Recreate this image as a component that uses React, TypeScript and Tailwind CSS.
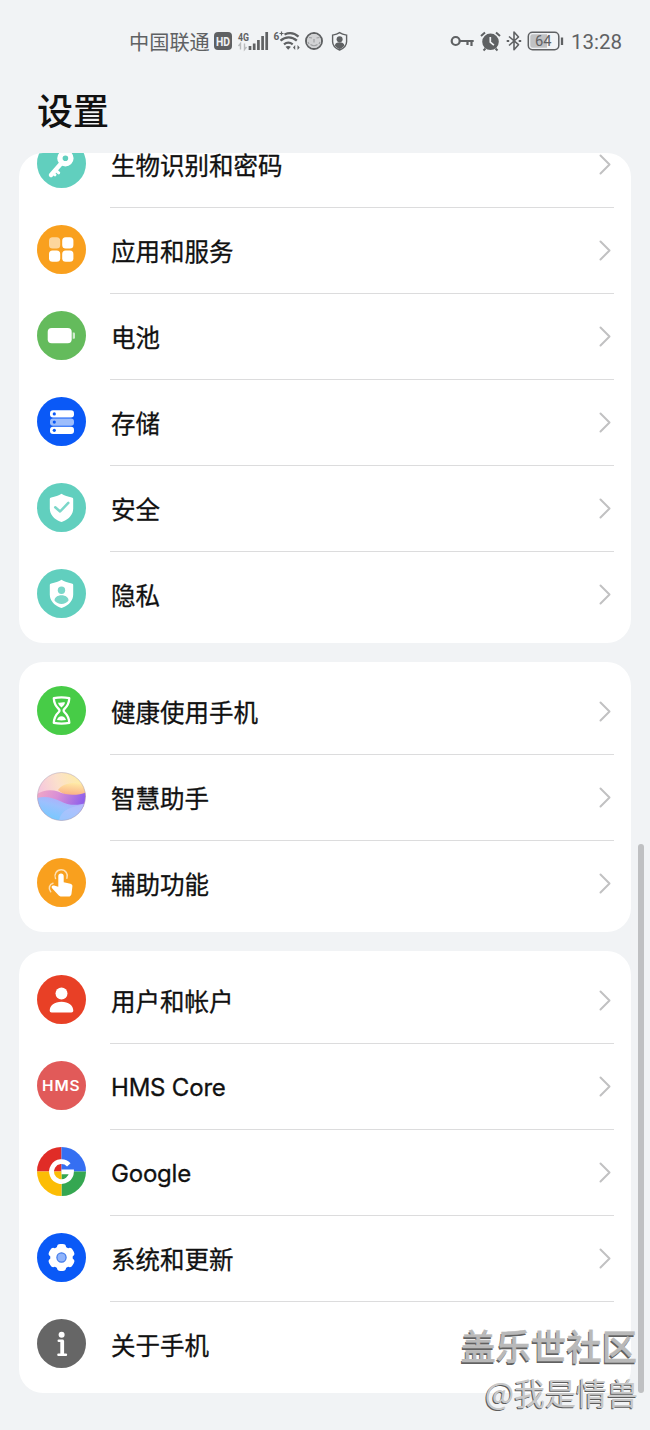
import type { ReactNode } from "react";
import { clsx } from "clsx";

type Item = { label: string; icon: ReactNode; latin?: boolean; plain?: boolean };

const TEAL = "#61cfbe";
const ORANGE = "#f9a01e";
const BLUE = "#0a59f7";

function Disc({ fill, children }: { fill: string; children?: ReactNode }) {
  return (
    <svg className="mb-px size-[49px] shrink-0" viewBox="0 0 49 49">
      <circle cx="24.5" cy="24.5" r="24.5" fill={fill} />
      {children}
    </svg>
  );
}

const shield = "M24.5 10.8c2.6 1.6 6.6 3 10.2 3.7 1 .2 1.5.8 1.5 1.8v9.2c0 6-4.2 10.6-10.3 13.1-1 .4-1.9.4-2.9 0-6-2.5-10.2-7.1-10.2-13.1v-9.2c0-1 .5-1.6 1.5-1.8 3.6-.7 7.6-2.1 10.2-3.7Z";

const KeyIcon = (
  <Disc fill={TEAL}>
    <path d="M25 23.500 14 36" stroke="#fff" strokeWidth="4.400" strokeLinecap="round" />
    <path d="m19 31.500 2.700 2.300M16 34l2 1.800" stroke="#fff" strokeWidth="3" strokeLinecap="round" />
    <circle cx="28.400" cy="19.300" r="5.500" fill="none" stroke="#fff" strokeWidth="5.400" />
  </Disc>
);

const AppsIcon = (
  <Disc fill={ORANGE}>
    <rect x="12" y="12.300" width="11.200" height="11.200" rx="3.500" fill="#fdd69c" />
    <rect x="25.200" y="12.300" width="11.200" height="11.200" rx="3.500" fill="#fff" />
    <rect x="12" y="25.600" width="11.200" height="11.200" rx="3.500" fill="#fff" />
    <rect x="25.200" y="25.600" width="11.200" height="11.200" rx="3.500" fill="#fff" />
  </Disc>
);

const BatteryIcon = (
  <Disc fill="#64bb5c">
    <rect x="10.700" y="17" width="24" height="15.200" rx="4" fill="#fff" />
    <path d="M35.700 21.500h1.300q1 0 1 1v4.200q0 1-1 1h-1.300z" fill="#d0ebce" />
  </Disc>
);

const StorageIcon = (
  <Disc fill={BLUE}>
    <rect x="13" y="13.200" width="24" height="7.300" rx="3" fill="#fff" />
    <rect x="13" y="21.500" width="24" height="7.300" rx="3" fill="#9dbdfc" />
    <rect x="13" y="29.700" width="24" height="7.300" rx="3" fill="#fff" />
    <circle cx="17.300" cy="16.900" r="1.600" fill={BLUE} />
    <circle cx="17.300" cy="25.100" r="1.600" fill={BLUE} />
    <circle cx="17.300" cy="33.300" r="1.600" fill={BLUE} />
  </Disc>
);

const SecurityIcon = (
  <Disc fill={TEAL}>
    <path d={shield} fill="#fff" />
    <path d="m18.200 24.200 4.900 4.300 8.200-8.600" fill="none" stroke="#7bd7c9" strokeWidth="2.500" strokeLinecap="round" strokeLinejoin="round" />
  </Disc>
);

const PrivacyIcon = (
  <Disc fill={TEAL}>
    <path d={shield} fill="#fff" />
    <circle cx="24.500" cy="21.300" r="3.700" fill="#7bd7c9" />
    <path d="M17.500 31.500c0-3 3-5.200 7-5.200s7 2.200 7 5.200c-1.700 2.100-4.100 3.500-7 3.500s-5.300-1.400-7-3.500Z" fill="#7bd7c9" />
  </Disc>
);

const HourglassIcon = (
  <Disc fill="#47cc47">
    <path
      d="M16.800 12.200c4.500-.9 11-.9 15.500 0-.2 5-1.500 7.500-5 10.900-.9.900-.9 2 0 2.900 3.500 3.300 4.800 6 5 10.900-4.500.9-11 .9-15.500 0 .2-4.900 1.500-7.600 5-10.900.9-.9.900-2 0-2.900-3.500-3.400-4.800-5.900-5-10.900Z"
      fill="none" stroke="#fff" strokeWidth="2.300" strokeLinejoin="round"
    />
    <path d="M21 16.500c2.300.9 4.700-.8 7 0-.4 2.200-1.700 3.300-3.500 5-1.800-1.700-3.100-2.800-3.500-5ZM20 34c.6-2.200 2.300-3.700 4.500-3.700s3.900 1.500 4.500 3.700c-3 .6-6 .6-9 0Z" fill="#fff" />
  </Disc>
);

const AssistantIcon = (
  <svg className="mb-px size-[49px] shrink-0" viewBox="0 0 49 49">
    <defs>
      <linearGradient id="sky" x1="0" y1=".45" x2="1" y2=".1">
        <stop offset="0" stopColor="#f5c3e0" />
        <stop offset=".45" stopColor="#fbe0cc" />
        <stop offset="1" stopColor="#fff09c" />
      </linearGradient>
      <linearGradient id="sun" x1=".6" y1="0" x2=".4" y2="1">
        <stop offset="0" stopColor="#ffeaa6" />
        <stop offset="1" stopColor="#f9a680" />
      </linearGradient>
      <linearGradient id="wave" x1="0" y1="0" x2="1" y2=".2">
        <stop offset="0" stopColor="#f2a9c4" />
        <stop offset=".45" stopColor="#d98fd6" />
        <stop offset="1" stopColor="#9160ea" />
      </linearGradient>
      <linearGradient id="sea" x1=".2" y1="1" x2=".8" y2="0">
        <stop offset="0" stopColor="#6fcbff" />
        <stop offset=".55" stopColor="#9cc0fd" />
        <stop offset="1" stopColor="#bda2f8" />
      </linearGradient>
      <clipPath id="orb"><circle cx="24.500" cy="24.500" r="24" /></clipPath>
    </defs>
    <g clipPath="url(#orb)">
      <path d="M0 0h49v49H0z" fill="url(#sky)" />
      <path d="M21 18c4-7 18-9 28-5v12c-9 0-21 0-28-7Z" fill="url(#sun)" />
      <path d="M0 22c6-4 14-5 21-2.500 9 4.500 20 4 28 1V40H0Z" fill="url(#wave)" />
      <path d="M0 26c8-2.500 16-.5 23 3 9 5 18 4.500 26 2v18H0Z" fill="url(#sea)" />
      <path d="M22 49c1-9 8-14 27-17v17Z" fill="#b9c4fd" opacity=".5" />
    </g>
    <circle cx="24.500" cy="24.500" r="24" fill="none" stroke="#aa9bb4" strokeOpacity=".6" strokeWidth=".8" />
  </svg>
);

const TouchIcon = (
  <Disc fill={ORANGE}>
    <path d="M21.300 18.200a2.700 2.700 0 0 1 5.400 0v6l6.700 1.500c1.500.4 2.200 1.300 2 2.800l-.9 7.300c-.3 1.900-1.300 2.800-3.100 2.800h-6.800c-1.500 0-2.600-.6-3.500-1.800l-6-6.600c-1.300-1.600.2-3.200 2-2.600l4.200 1.200Z" fill="#fff" />
    <path d="M18.500 20.500a6.200 6.200 0 1 1 11.400-.2M16 25.300c-3.700 1-5 5.300-2.300 8.400" fill="none" stroke="#fde0b5" strokeWidth="1.500" strokeLinecap="round" />
  </Disc>
);

const UserIcon = (
  <Disc fill="#e84026">
    <circle cx="24.500" cy="18.600" r="6" fill="#fff" />
    <path d="M12.700 35.500c0-5.200 4.800-8.800 11.800-8.800s11.800 3.600 11.800 8.800c0 1.200-.7 1.900-1.900 1.900H14.600c-1.200 0-1.900-.7-1.900-1.900Z" fill="#fff" />
  </Disc>
);

const HmsIcon = (
  <Disc fill="#e15a59">
    <text x="5" y="29.800" textLength="38.500" lengthAdjust="spacingAndGlyphs" className="fill-white font-['Inter'] text-[14px] font-semibold tracking-[0.8px]">HMS</text>
  </Disc>
);

const GoogleIcon = (
  <svg className="mb-px size-[49px] shrink-0" viewBox="0 0 49 49">
    <path d="M24.500 24.500H0A24.500 24.500 0 0 1 24.500 0Z" fill="#e02c27" />
    <path d="M24.500 24.500V0A24.500 24.500 0 0 1 49 24.500Z" fill="#356ff2" />
    <path d="M24.500 24.500H49A24.500 24.500 0 0 1 24.500 49Z" fill="#35a751" />
    <path d="M24.500 24.500V49A24.500 24.500 0 0 1 0 24.500Z" fill="#fcbd05" />
    <path d="M31.800 17.800A10 10 0 1 0 34.500 24.800H24.500" fill="none" stroke="#fff" strokeWidth="4.800" />
  </svg>
);

const GearIcon = (
  <Disc fill={BLUE}>
    <g fill="#fff">
      <circle cx="24.500" cy="24.500" r="11.200" />
      <rect x="19.900" y="11" width="9.200" height="27" rx="3.400" />
      <rect x="19.900" y="11" width="9.200" height="27" rx="3.400" transform="rotate(60 24.500 24.500)" />
      <rect x="19.900" y="11" width="9.200" height="27" rx="3.400" transform="rotate(120 24.500 24.500)" />
    </g>
    <circle cx="24.500" cy="24.500" r="4.600" fill="#8fb3fb" stroke="#3c77ea" strokeWidth="1.200" />
  </Disc>
);

const InfoIcon = (
  <Disc fill="#666">
    <circle cx="24.600" cy="15.700" r="3" fill="#fff" />
    <path d="M21.800 21.800h3.800v13.800M21.500 35.700h7.400" fill="none" stroke="#fff" strokeWidth="2.600" strokeLinecap="round" strokeLinejoin="round" />
    <path d="M25.200 21.800v13.500" stroke="#fff" strokeWidth="3.800" />
  </Disc>
);

const groups: Item[][] = [
  [
    { label: "生物识别和密码", icon: KeyIcon },
    { label: "应用和服务", icon: AppsIcon },
    { label: "电池", icon: BatteryIcon },
    { label: "存储", icon: StorageIcon },
    { label: "安全", icon: SecurityIcon },
    { label: "隐私", icon: PrivacyIcon },
  ],
  [
    { label: "健康使用手机", icon: HourglassIcon },
    { label: "智慧助手", icon: AssistantIcon },
    { label: "辅助功能", icon: TouchIcon },
  ],
  [
    { label: "用户和帐户", icon: UserIcon },
    { label: "HMS Core", icon: HmsIcon, latin: true },
    { label: "Google", icon: GoogleIcon, latin: true },
    { label: "系统和更新", icon: GearIcon },
    { label: "关于手机", icon: InfoIcon, plain: true },
  ],
];

function Row({ item, last }: { item: Item; last: boolean }) {
  return (
    <div className="flex h-[86px] items-center pl-[18px]">
      {item.icon}
      <div className={clsx("ml-6 mr-[17px] flex h-[87px] flex-1 items-center justify-between border-b pl-px", last ? "border-transparent" : "border-[#dcdcdd]")}>
        <span
          className={clsx(
            "leading-[22px] whitespace-nowrap text-[#111] [-webkit-text-stroke:0.3px_#111]",
            item.latin ? "pt-[4px] font-['Inter'] text-[24px] tracking-[-0.2px]" : "pt-[2px] text-[24.500px]"
          )}
        >
          {item.label}
        </span>
        {!item.plain && (
          <svg className="mt-0.5 mr-[3px] h-[21px] w-3" viewBox="0 0 12 21" fill="none">
            <path d="m1.500 1.500 9 9-9 9" stroke="#c1c1c2" strokeWidth="2" strokeLinecap="round" strokeLinejoin="round" />
          </svg>
        )}
      </div>
    </div>
  );
}

function StatusBar() {
  return (
    <div className="flex h-[82px] items-center pl-[129px] text-[#5f6163]">
      <span className="w-[85px] pt-[2px] text-[20.200px] leading-none">中国联通</span>
      <svg className="h-[18px] w-[134px]" viewBox="214 32 134 18" overflow="visible" fill="none" stroke="currentColor">
        <g stroke="none" fill="currentColor">
          <rect x="214" y="32" width="18" height="18" rx="4" />
          <text x="216" y="45.500" textLength="14" lengthAdjust="spacingAndGlyphs" className="fill-[#f1f3f5] font-['Roboto'] text-[12px] font-bold">HD</text>
          <text x="238" y="40.500" textLength="11" lengthAdjust="spacingAndGlyphs" className="font-['Roboto'] text-[11px] font-bold">4G</text>
          <text x="273.500" y="39.500" className="font-['Roboto'] text-[10px] font-bold">6</text>
        </g>
        <path d="M240.500 49.500v-6l-2 2.500M244.500 43.500v6l2-2.500" stroke="#b8babc" strokeWidth="1.400" />
        <path d="M250 50v-4M254.200 50v-6.500M258.400 50v-10M262.600 50v-14M266.700 50V32" strokeWidth="2.700" />
        <path d="M279.500 33.500h4M281.500 31.500v4" strokeWidth="1.200" />
        <path d="M284.500 34.500c5-2.200 10-1.500 14 2.200M280.500 40.700c5-4.400 11.500-4.400 16.300 0M284 44.400c2.700-2.200 6-2.200 8.700 0" strokeWidth="2.300" />
        <path d="M285.500 46.800q2.700-1.800 5.400 0l-2.700 3Z" fill="currentColor" stroke="none" />
        <path d="m295.200 45-2.200 2.500 2.200 2.500ZM297.500 45l2.200 2.500-2.200 2.500Z" fill="currentColor" stroke="none" />
        <circle cx="314" cy="41" r="8" strokeWidth="2" />
        <circle cx="314" cy="41" r="7" fill="#d2d3d5" stroke="none" />
        <path d="M309 37.500l3 .5M316.500 38l3-.5M314 39v3.500M310.500 44.500q3.500 2.500 7 0M308 42l1 2M320 42l-1 2" stroke="#9fa1a3" strokeWidth="1.200" />
        <path d="M339.600 32.700c2 1.300 4.500 2 7 2.400v6.600c0 4-3 6.600-7 8.300-4-1.700-7-4.300-7-8.300v-6.600c2.500-.4 5-1.100 7-2.400Z" strokeWidth="1.400" />
        <circle cx="339.600" cy="39.200" r="3" fill="currentColor" stroke="none" />
        <path d="M334.800 45.500c.4-2.200 2.200-3.200 4.800-3.200s4.400 1 4.800 3.200c-1 1.600-2.700 2.800-4.800 3.500-2.100-.7-3.800-1.900-4.800-3.500Z" fill="currentColor" stroke="none" />
      </svg>
      <svg className="ml-[102px] h-[20px] w-[114px]" viewBox="450 31 114 20" overflow="visible" fill="none" stroke="currentColor">
        <circle cx="455.700" cy="41" r="4" strokeWidth="2.200" />
        <path d="M459.700 41h14M467.500 41v4M471.500 41v5" strokeWidth="2.200" />
        <circle cx="490.500" cy="41.800" r="8.300" fill="currentColor" stroke="none" />
        <path d="m481 36 4-3.600M500 36l-4-3.600M485.500 48.500l-2 2M495.500 48.500l2 2" strokeWidth="2" />
        <path d="M490.300 37v5.200l3.600 3" stroke="#f1f3f5" strokeWidth="1.700" />
        <path d="m509 36.500 9.500 8.200-4.500 5V32l4.500 5-9.500 8.500" strokeWidth="1.600" strokeLinejoin="round" />
        <path d="M506.700 41h2.500M518.700 41h2.500" strokeWidth="2" />
        <rect x="528.300" y="32.300" width="30.500" height="17.400" rx="4.200" strokeWidth="1.500" />
        <path d="M532.500 34.300h14.500v13.400h-14.500q-2.200 0-2.200-2.200v-9q0-2.200 2.200-2.200Z" fill="#c0c2c4" stroke="none" />
        <path d="M562 37.500v7.500" strokeWidth="2.300" />
        <text x="535" y="46" stroke="none" fill="currentColor" textLength="16.500" lengthAdjust="spacingAndGlyphs" className="font-['Roboto'] text-[14px]">64</text>
      </svg>
      <span className="ml-[7px] pt-[2px] font-['Roboto'] text-[20.500px] leading-none">13:28</span>
    </div>
  );
}

export default function App() {
  return (
    <div className="relative h-[1430px] w-[650px] overflow-hidden bg-[#f1f3f5] font-['Noto_Sans_CJK_SC',sans-serif]">
      <StatusBar />
      <h1 className="h-[71px] pl-[37px] text-[36px] leading-[54px] font-medium text-[#111]">设置</h1>
      <main className="flex flex-col gap-[19px] px-[19px]">
        {groups.map((items, i) => (
          <section key={i} className={clsx("overflow-hidden rounded-[24px] bg-white pb-1.5", i > 0 && "pt-1.5")}>
            {/* the first group is scrolled partly under the title */}
            <div className={clsx(i === 0 && "-mt-8")}>
              {items.map((item, j) => (
                <Row key={item.label} item={item} last={j === items.length - 1} />
              ))}
            </div>
          </section>
        ))}
      </main>
      <div className="absolute left-[638px] top-[844px] h-[549px] w-1.5 rounded-full bg-[#bfc0c2]" />
      <div className="absolute right-[13px] bottom-[15px] flex flex-col items-end whitespace-nowrap">
        <span className="text-[35.300px] leading-[47px] font-medium text-[#b9b9b9] [-webkit-text-stroke:0.4px_#b9b9b9] [text-shadow:-1px_2px_0_#616161]">盖乐世社区</span>
        <span className="-mr-px text-[31px] leading-[47px] text-[#c8c8c8] [text-shadow:-1px_1px_0_#5c5c5c]">@我是情兽</span>
      </div>
    </div>
  );
}
